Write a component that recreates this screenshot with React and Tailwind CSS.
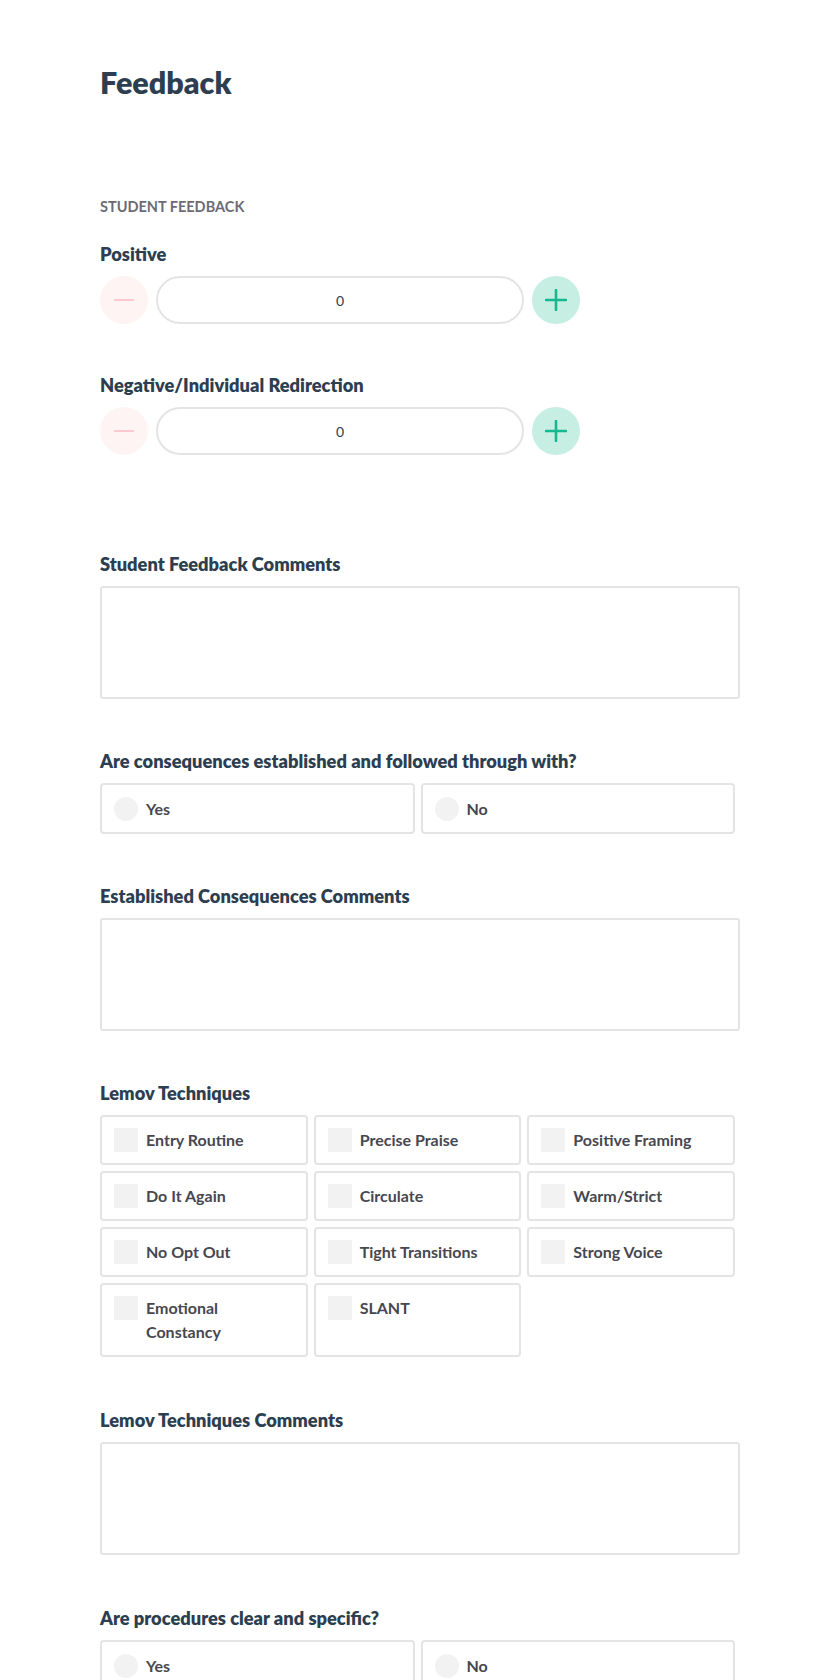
import React from "react";

const Label = ({ children }) => (
  <div className="text-[18.25px] leading-[24px] font-extrabold text-[#2c3e50] mb-[10px]">{children}</div>
);

const Stepper = () => (
  <div className="flex items-center gap-[8px]">
    <button className="w-[48px] h-[48px] rounded-full bg-[#fff4f4] flex items-center justify-center shrink-0">
      <svg width="20" height="20" viewBox="0 0 20 20">
        <line x1="1" y1="10" x2="19" y2="10" stroke="#fbc8cf" strokeWidth="2.2" strokeLinecap="round" />
      </svg>
    </button>
    <div className="w-[368px] h-[48px] rounded-full border-2 border-[#e4e4e4] flex items-center justify-center text-[14px] text-[#2c3e50]">
      0
    </div>
    <button className="w-[48px] h-[48px] rounded-full bg-[#c7eee3] flex items-center justify-center shrink-0">
      <svg width="22" height="22" viewBox="0 0 22 22">
        <line x1="1" y1="11" x2="21" y2="11" stroke="#17b890" strokeWidth="2.6" strokeLinecap="round" />
        <line x1="11" y1="1" x2="11" y2="21" stroke="#17b890" strokeWidth="2.6" strokeLinecap="round" />
      </svg>
    </button>
  </div>
);

const TextArea = () => (
  <textarea className="block w-[640px] h-[113px] border-2 border-[#e4e4e4] rounded-[3px] resize-none outline-none" />
);

const Radio = ({ label }) => (
  <div className="h-[51px] border-2 border-[#e4e4e4] rounded-[4px] flex items-center px-[12px] gap-[8px]">
    <div className="w-[24px] h-[24px] rounded-full bg-[#f2f2f2] shrink-0" />
    <span className="text-[16px] font-bold text-[#46474f]">{label}</span>
  </div>
);

const YesNo = () => (
  <div className="grid grid-cols-2 gap-[6px] w-[635px]">
    <Radio label="Yes" />
    <Radio label="No" />
  </div>
);

const Check = ({ label }) => (
  <div className="min-h-[50px] border-2 border-[#e4e4e4] rounded-[4px] flex items-start px-[12px] py-[11px] gap-[8px]">
    <div className="w-[24px] h-[24px] bg-[#f2f2f2] shrink-0" />
    <span className="text-[16px] leading-[24px] font-bold text-[#46474f]">{label}</span>
  </div>
);

const techniques = [
  "Entry Routine",
  "Precise Praise",
  "Positive Framing",
  "Do It Again",
  "Circulate",
  "Warm/Strict",
  "No Opt Out",
  "Tight Transitions",
  "Strong Voice",
  "Emotional Constancy",
  "SLANT",
];

export default function App() {
  return (
    <div className="min-h-screen bg-white px-[100px] pt-[64px] pb-[40px] font-['Lato','Noto_Sans',sans-serif]">
      <h1 className="text-[30.5px] leading-[36px] font-extrabold text-[#2c3e50]">Feedback</h1>
      <div className="mt-[97px] text-[14.5px] leading-[20px] font-bold uppercase text-[#6b6b76]">
        Student Feedback
      </div>

      <div className="mt-[25px]">
        <Label>Positive</Label>
        <Stepper />
      </div>

      <div className="mt-[49px]">
        <Label>Negative/Individual Redirection</Label>
        <Stepper />
      </div>

      <div className="mt-[97px]">
        <Label>Student Feedback Comments</Label>
        <TextArea />
      </div>

      <div className="mt-[50px]">
        <Label>Are consequences established and followed through with?</Label>
        <YesNo />
      </div>

      <div className="mt-[50px]">
        <Label>Established Consequences Comments</Label>
        <TextArea />
      </div>

      <div className="mt-[50px]">
        <Label>Lemov Techniques</Label>
        <div className="grid grid-cols-3 gap-[6px] w-[635px]">
          {techniques.map((t) => (
            <Check key={t} label={t} />
          ))}
        </div>
      </div>

      <div className="mt-[51px]">
        <Label>Lemov Techniques Comments</Label>
        <TextArea />
      </div>

      <div className="mt-[51px]">
        <Label>Are procedures clear and specific?</Label>
        <YesNo />
      </div>
    </div>
  );
}
